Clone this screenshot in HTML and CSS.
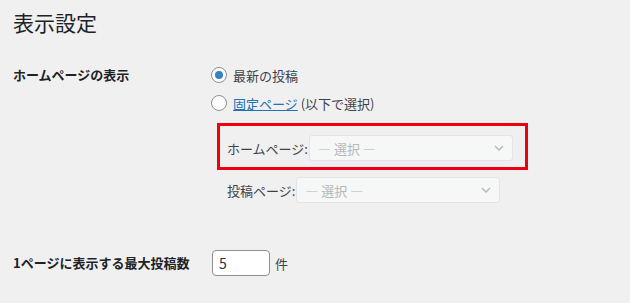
FILE: index.html
```html
<!DOCTYPE html>
<html lang="ja">
<head>
  <meta charset="UTF-8" />
  <title>表示設定</title>
  <link rel="stylesheet" href="styles.css">
</head>
<body>
  <h1 class="page-title">表示設定</h1>

  <div class="form-row">
    <div class="row-label">ホームページの表示</div>
    <div class="row-field">
      <label class="radio-line">
        <span class="radio checked"></span>
        最新の投稿
      </label>
      <label class="radio-line">
        <span class="radio"></span>
        <a href="#" class="link">固定ページ</a>&nbsp;(以下で選択)
      </label>

      <div class="highlight">
        <div class="page-select">
          <span class="select-label">ホームページ:</span>
          <div class="select">
            <span>— 選択 —</span>
            <svg width="10" height="6" viewBox="0 0 10 6"><path d="M1 1l4 4 4-4" fill="none" stroke="#b4b7ba" stroke-width="1.4"/></svg>
          </div>
        </div>
      </div>

      <div class="page-select posts">
        <span class="select-label">投稿ページ:</span>
        <div class="select">
          <span>— 選択 —</span>
          <svg width="10" height="6" viewBox="0 0 10 6"><path d="M1 1l4 4 4-4" fill="none" stroke="#b4b7ba" stroke-width="1.4"/></svg>
        </div>
      </div>
    </div>
  </div>

  <div class="form-row per-page">
    <div class="row-label">1ページに表示する最大投稿数</div>
    <div class="row-field inline">
      <input type="text" class="num-input" value="5">
      <span class="unit">件</span>
    </div>
  </div>
</body>
</html>
```

FILE: styles.css
```css
* {
  box-sizing: border-box;
  margin: 0;
  padding: 0;
}

body {
  background-color: #f0f0f1;
  color: #3c434a;
  font-family: "Noto Sans CJK JP", "Noto Sans", sans-serif;
  font-size: 13px;
  padding: 8px 13px 0;
}

.page-title {
  font-size: 21px;
  font-weight: 400;
  line-height: 28px;
  color: #1d2327;
}

.form-row {
  display: flex;
  margin-top: 25px;
}

.row-label {
  width: 198px;
  flex-shrink: 0;
  font-weight: 700;
  color: #1d2327;
  line-height: 28px;
}

.row-field {
  display: flex;
  flex-direction: column;
}

.radio-line {
  display: flex;
  align-items: center;
  height: 28px;
}

.radio {
  width: 16px;
  height: 16px;
  margin-right: 6px;
  border: 1px solid #8c8f94;
  border-radius: 50%;
  background-color: white;
  display: flex;
  align-items: center;
  justify-content: center;
}

.radio.checked::after {
  content: "";
  width: 8px;
  height: 8px;
  border-radius: 50%;
  background-color: #3582c4;
}

.link {
  color: #2271b1;
}

.highlight {
  width: 311px;
  margin: 6px 0 0 6px;
  padding: 9px 12px 6px 7px;
  border: 3px solid #ee0010;
}

.page-select {
  display: flex;
  align-items: center;
}

.page-select.posts {
  margin: 7px 0 0 16px;
}

.select-label {
  color: #3c434a;
  margin-right: 1px;
}

.select {
  width: 204px;
  height: 26px;
  display: flex;
  align-items: center;
  justify-content: space-between;
  padding: 0 8px;
  background-color: #f6f7f7;
  border: 1px solid #e4e4e6;
  border-radius: 3px;
  color: #b4b7ba;
}

.per-page {
  margin-top: 47px;
  align-items: center;
}

.per-page .row-label {
  line-height: 26px;
}

.inline {
  flex-direction: row;
  align-items: center;
}

.num-input {
  width: 58px;
  height: 26px;
  margin-left: 1px;
  padding: 0 6px;
  border: 1px solid #8c8f94;
  border-radius: 4px;
  background-color: white;
  font-family: inherit;
  font-size: 14px;
  color: #2c3338;
}

.unit {
  margin-left: 5px;
}
```
